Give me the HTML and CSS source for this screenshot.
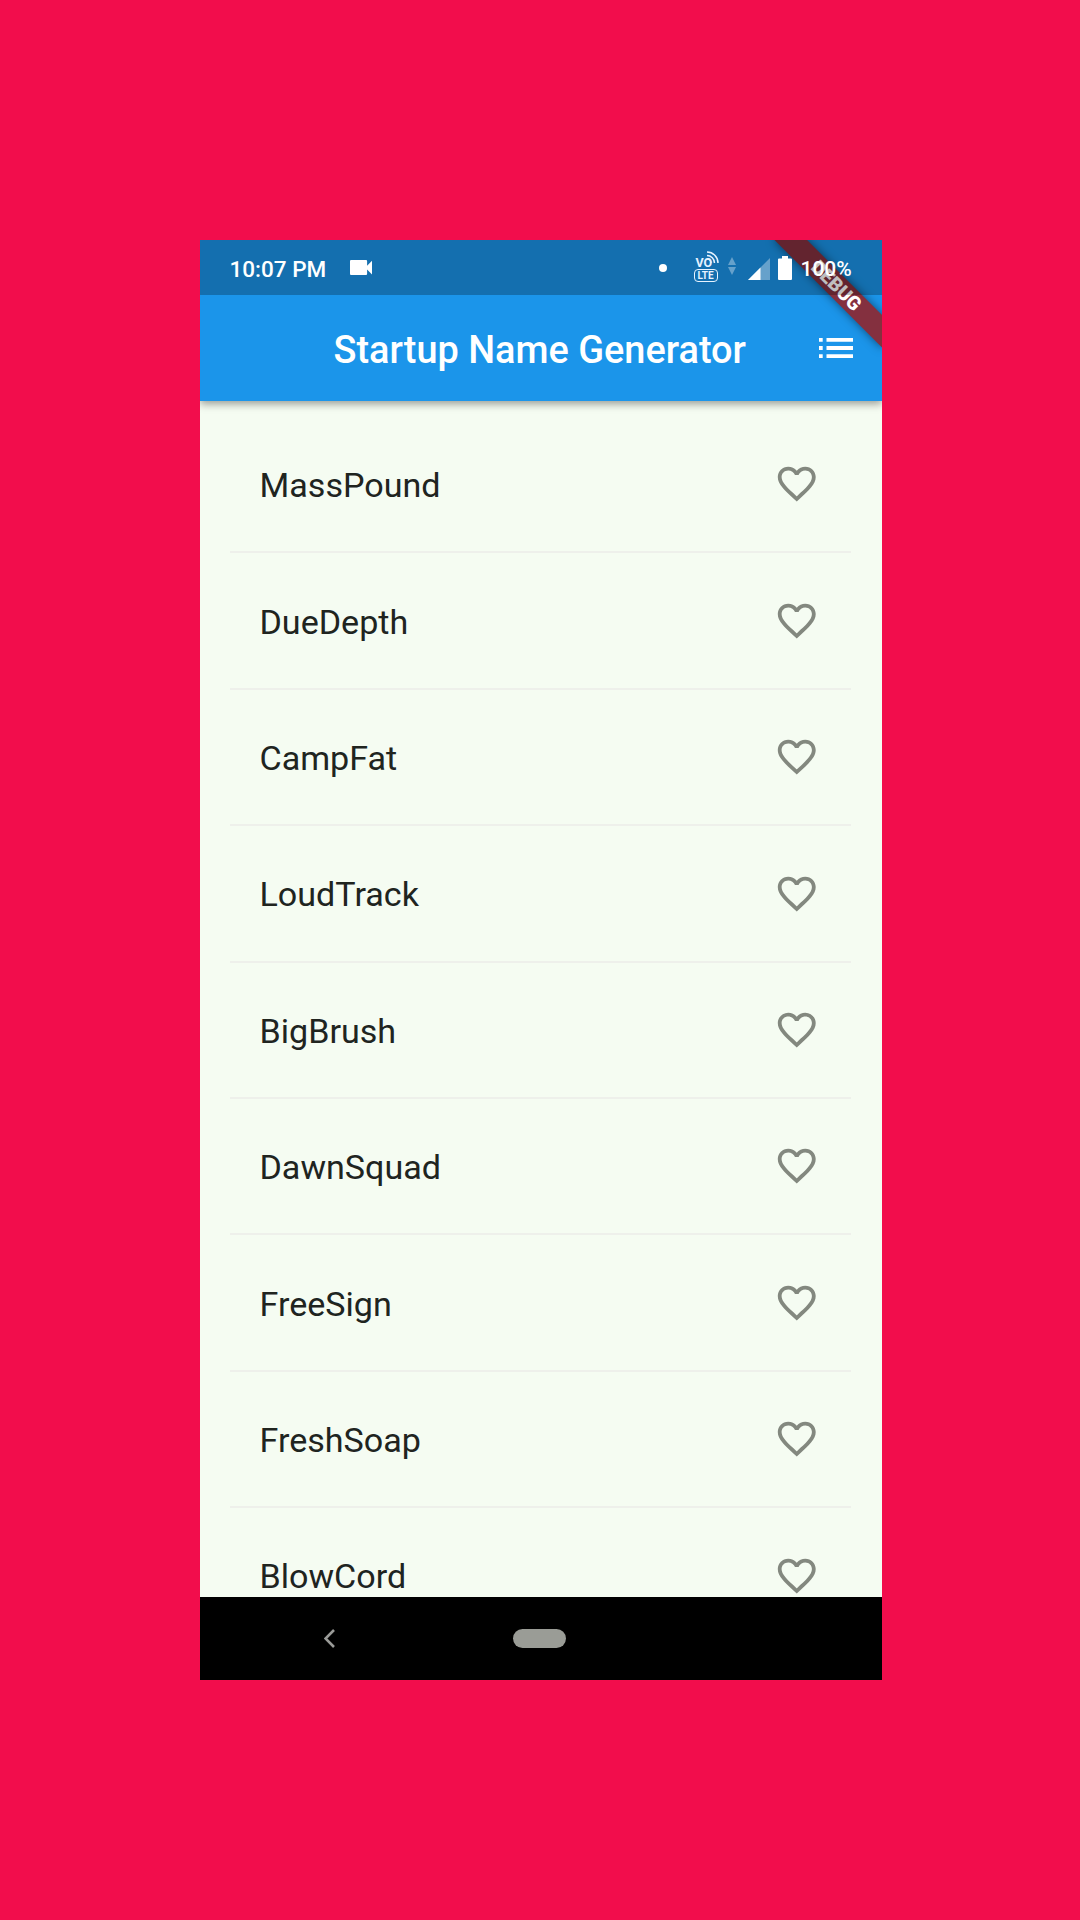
FILE: index.html
```html
<!DOCTYPE html>
<html lang="en">
<head>
<meta charset="utf-8">
<title>Startup Name Generator</title>
<link rel="stylesheet" href="styles.css">
</head>
<body>
<svg class="defs" width="0" height="0">
  <symbol id="heart" viewBox="0 0 24 24"><path d="M16.5 3c-1.74 0-3.41.81-4.5 2.09C10.91 3.81 9.24 3 7.5 3 4.42 3 2 5.42 2 8.5c0 3.78 3.4 6.86 8.55 11.54L12 21.35l1.45-1.32C18.6 15.36 22 12.28 22 8.5 22 5.42 19.58 3 16.5 3zm-4.4 15.55l-.1.1-.1-.1C7.14 14.24 4 11.39 4 8.5 4 6.5 5.5 5 7.5 5c1.54 0 3.04.99 3.57 2.36h1.87C13.46 5.99 14.96 5 16.5 5c2 0 3.5 1.5 3.5 3.5 0 2.89-3.14 5.74-7.9 10.05z"/></symbol>
</svg>
<main class="phone">
  <header class="top">
    <div class="banner-clip"><div class="banner">DEBUG</div></div>
    <div class="status">
      <span class="time">10:07 PM</span>
      <svg class="camera" viewBox="3 6 18 12" preserveAspectRatio="none"><path d="M17 10.5V7c0-.55-.45-1-1-1H4c-.55 0-1 .45-1 1v10c0 .55.45 1 1 1h12c.55 0 1-.45 1-1v-3.500l4 4v-11l-4 4z"/></svg>
      <span class="dot"></span>
      <div class="volte">
        <div class="vo"><span>VO</span><svg viewBox="0 0 13 13"><path d="M1 8a4 4 0 0 1 4 4M1 4.500a7.500 7.500 0 0 1 7.500 7.500M1 1a11 11 0 0 1 11 11"/></svg></div>
        <div class="lte">LTE</div>
      </div>
      <svg class="data" viewBox="0 0 8 18"><path d="M4 0l4 8H0zM4 18l4-8H0z"/></svg>
      <svg class="signal" viewBox="0 0 22 22"><path opacity=".35" d="M0 22L22 0v22z"/><path d="M0 22L12.500 9.500V22z"/></svg>
      <svg class="battery" viewBox="0 0 14 24"><path d="M4 0h6v2.500h3q1 0 1 1V23q0 1-1 1H1q-1 0-1-1V3.500q0-1 1-1h3z"/></svg>
      <span class="percent">100%</span>
    </div>
    <div class="appbar">
      <h1>Startup Name Generator</h1>
      <svg class="menu" viewBox="0 0 34 20"><path d="M0 0h3.700v3.800H0zM0 8.100h3.700v3.800H0zM0 16.200h3.700V20H0zM7.500 0H34v3.800H7.500zM7.500 8.100H34v3.800H7.500zM7.500 16.200H34V20H7.500z"/></svg>
    </div>
  </header>
  <ul class="list">
    <li><span>MassPound</span><svg><use href="#heart"/></svg></li>
    <li><span>DueDepth</span><svg><use href="#heart"/></svg></li>
    <li><span>CampFat</span><svg><use href="#heart"/></svg></li>
    <li><span>LoudTrack</span><svg><use href="#heart"/></svg></li>
    <li><span>BigBrush</span><svg><use href="#heart"/></svg></li>
    <li><span>DawnSquad</span><svg><use href="#heart"/></svg></li>
    <li><span>FreeSign</span><svg><use href="#heart"/></svg></li>
    <li><span>FreshSoap</span><svg><use href="#heart"/></svg></li>
    <li><span>BlowCord</span><svg><use href="#heart"/></svg></li>
  </ul>
  <nav class="nav">
    <svg class="back" viewBox="0 0 11 19"><path d="M10 1L1.500 9.500L10 18"/></svg>
    <span class="home"></span>
  </nav>
</main>
</body>
</html>
```
FILE: styles.css
```css
* { box-sizing: border-box; }
body {
  margin: 0;
  height: 1920px;
  display: flex;
  justify-content: center;
  align-items: center;
  background: #f20d4c;
  font-family: Roboto, "Liberation Sans", sans-serif;
  overflow: hidden;
}
.defs { position: absolute; }
.phone {
  width: 682px;
  height: 1440px;
  margin-left: 1px;
  display: flex;
  flex-direction: column;
  background: #f5fcf2;
  overflow: hidden;
}
.top {
  position: relative;
  z-index: 1;
  flex: none;
  background: #1b95ea;
  box-shadow: 0 3px 8px rgba(0, 0, 0, .38);
  color: #fff;
}
.status {
  position: relative;
  height: 55px;
  display: flex;
  align-items: center;
  padding: 2px 30px 0;
  background: rgba(0, 0, 0, .25);
  font-size: 22.500px;
  font-weight: 500;
}
.status svg, .menu { fill: #fff; flex: none; }
.time { width: 120px; white-space: nowrap; }
.camera { width: 22px; height: 15px; margin-bottom: 2px; }
.dot { width: 8px; height: 8px; margin: 0 27px 2px auto; border-radius: 50%; background: #fff; }
.volte { width: 26px; height: 30px; margin-bottom: 3px; color: #e6f3ff; }
.vo { display: flex; height: 17px; padding-left: 2px; align-items: flex-end; font-size: 12.500px; line-height: 12px; font-weight: 700; }
.vo svg { width: 13px; height: 13px; margin: 0 0 5px -6px; fill: none; stroke: #e6f3ff; stroke-width: 1.500; }
.lte { width: 24px; height: 13px; border: 1.500px solid #e6f3ff; border-radius: 4px; font-size: 10px; line-height: 11px; font-weight: 700; text-align: center; }
.status .data { width: 8px; height: 18px; margin: 0 12px 6px 8px; opacity: .35; }
.signal { width: 22px; height: 22px; margin-right: 8px; }
.battery { width: 14px; height: 24px; margin: 0 9px 2px 0; }
.percent { width: 51px; font-size: 21px; white-space: nowrap; }
.appbar {
  height: 106px;
  display: flex;
  align-items: center;
  justify-content: space-between;
  padding: 0 29px 0 134px;
}
h1 { margin: 3px 0 0; font-size: 37.900px; font-weight: 500; white-space: nowrap; }
.menu { width: 34px; height: 20px; }
/* Diagonal corner ribbon; it lies beneath the translucent status bar. */
.banner-clip { position: absolute; inset: 0; overflow: hidden; }
.banner {
  position: absolute;
  top: 53px;
  right: -76px;
  width: 152px;
  height: 23px;
  transform: rotate(45deg);
  transform-origin: 50% -53px;
  background: #84303f;
  box-shadow: 0 0 10px rgba(0, 0, 0, .5);
  font-size: 19.300px;
  line-height: 23px;
  font-weight: 900;
  text-align: center;
}
.list {
  flex: 1;
  min-height: 0;
  margin: 0;
  padding: 16px 31px 0 30px;
  list-style: none;
  overflow: hidden;
}
.list li {
  height: 136.400px;
  display: flex;
  align-items: center;
  justify-content: space-between;
  padding: 0 31px 0 30px;
  border-bottom: 2px solid #eef0eb;
  color: #20241f;
  font-size: 34.100px;
}
.list span { padding-top: 2px; }
.list svg { width: 45.500px; height: 45.500px; fill: #83887f; }
.nav {
  height: 83px;
  flex: none;
  display: grid;
  grid-template-columns: 313px 53px;
  align-items: center;
  background: #000;
}
.back { width: 11px; height: 19px; margin: 0 0 0 124px; fill: none; stroke: #9a9b98; stroke-width: 2.600; }
.home { height: 19px; border-radius: 10px; background: #9a9c96; }
```
